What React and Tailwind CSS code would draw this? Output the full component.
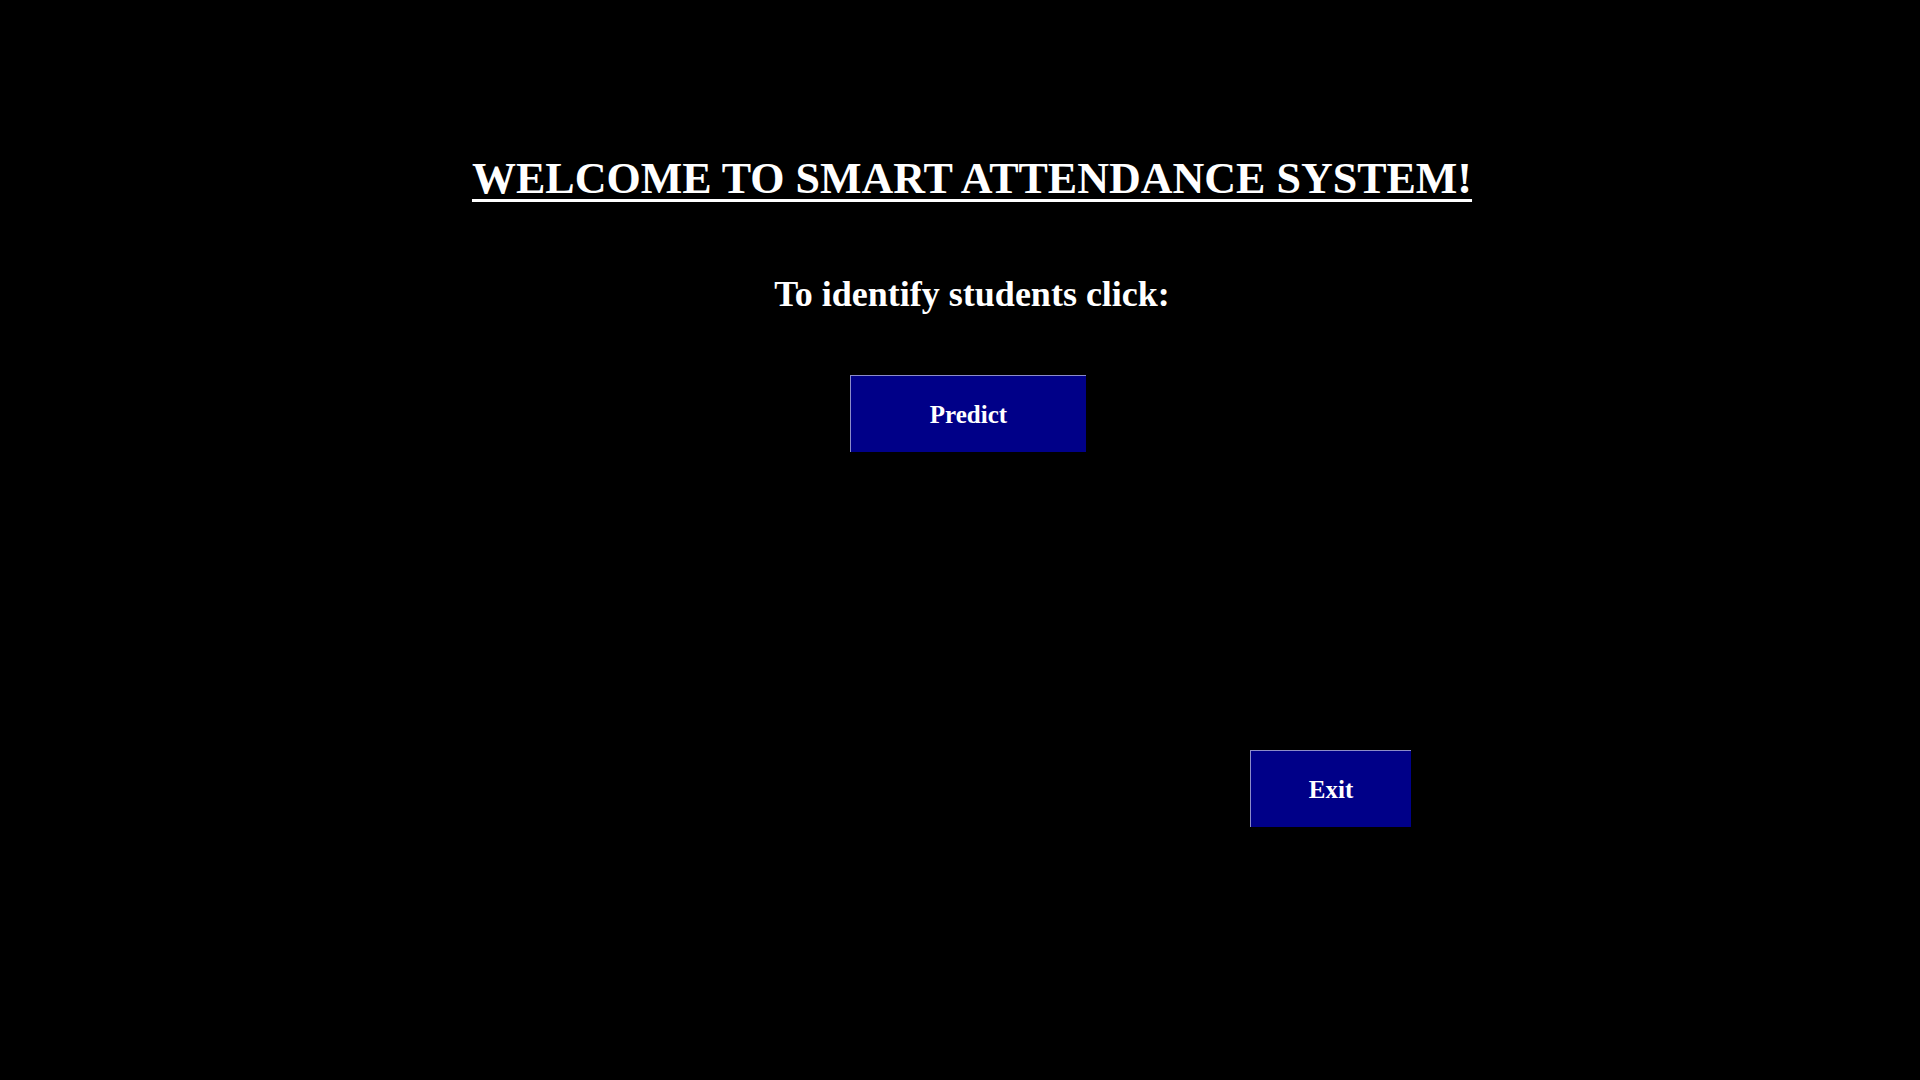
export default function App() {
  return (
    <div className="min-h-screen w-full bg-black font-['Liberation_Serif','Times_New_Roman',serif] font-bold text-white">
      <div className="flex flex-col items-center pt-[157px] pl-6">
        <h1 className="text-[44px] leading-none underline decoration-[3px] underline-offset-[6px]">
          WELCOME TO SMART ATTENDANCE SYSTEM!
        </h1>

        <p className="mt-[75px] text-[36px] leading-none">
          To identify students click:
        </p>

        <button className="mt-[63px] mr-2 w-[236px] h-[77px] bg-[#000088] border-t border-l border-[#8c8cc8] text-[25px] leading-none text-white">
          Predict
        </button>
      </div>

      {/* Exit row */}
      <div className="flex justify-end pr-[509px] mt-[298px]">
        <button className="w-[161px] h-[77px] bg-[#000088] border-t border-l border-[#8c8cc8] text-[25px] leading-none text-white">
          Exit
        </button>
      </div>
    </div>
  );
}
